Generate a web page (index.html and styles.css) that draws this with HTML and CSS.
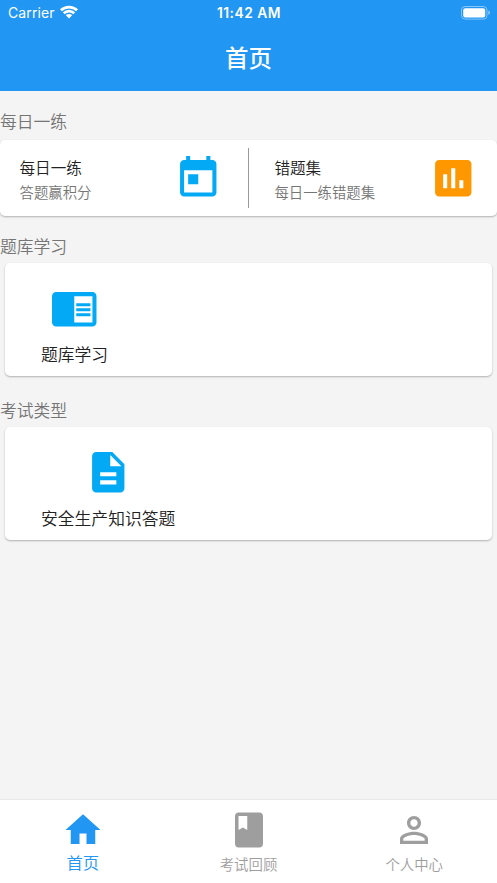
FILE: index.html
```html
<!DOCTYPE html>
<html lang="zh-CN">
<head>
<meta charset="utf-8">
<title>首页</title>
<link rel="stylesheet" href="styles.css">
</head>
<body>
<div class="app">
  <header class="header">
    <div class="status">
      <div class="carrier"><span>Carrier</span>
        <svg class="wifi" viewBox="0 0 18 14"><path d="M0 4.3A13 13 0 0 1 18 4.3L16.1 6.3A10.3 10.3 0 0 0 1.9 6.3Z"/><path d="M2.8 7.3A8.8 8.8 0 0 1 15.2 7.3L13.3 9.3A6.2 6.2 0 0 0 4.7 9.3Z"/><path d="M5.8 10.3A4.6 4.6 0 0 1 12.2 10.3L9 13.6Z"/></svg>
      </div>
      <div class="time">11:42 AM</div>
      <svg class="battery" viewBox="0 0 30 14"><rect x=".5" y=".5" width="25.5" height="12.6" rx="3.6" fill="none" stroke="#fff" stroke-opacity=".45"/><rect x="2.2" y="2.2" width="22" height="9.2" rx="2" fill="#fff"/><path d="M27.3 4.6Q29 5.2 29 6.8T27.3 9Z" fill="#fff" fill-opacity=".5"/></svg>
    </div>
    <h1 class="title">首页</h1>
  </header>
  <main class="content">
    <h2 class="section">每日一练</h2>
    <section class="card daily">
      <div class="entry">
        <div class="words"><div class="name">每日一练</div><div class="desc">答题赢积分</div></div>
        <svg class="icon blue" viewBox="0 0 24 24"><path d="M19 3h-1V1h-2v2H8V1H6v2H5c-1.11 0-1.99.9-1.99 2L3 19c0 1.1.89 2 2 2h14c1.1 0 2-.9 2-2V5c0-1.1-.9-2-2-2zm0 16H5V8h14v11zM7 10h5v5H7z"/></svg>
      </div>
      <div class="divider"></div>
      <div class="entry">
        <div class="words"><div class="name">错题集</div><div class="desc">每日一练错题集</div></div>
        <svg class="icon orange" viewBox="0 0 24 24"><path d="M19 3H5c-1.1 0-2 .9-2 2v14c0 1.1.9 2 2 2h14c1.1 0 2-.9 2-2V5c0-1.1-.9-2-2-2zM9 17H7v-7h2v7zm4 0h-2V7h2v10zm4 0h-2v-4h2v4z"/></svg>
      </div>
    </section>
    <h2 class="section second">题库学习</h2>
    <section class="card tile">
      <div class="tile-item">
        <svg class="icon blue" viewBox="0 0 24 24"><path d="M13 12h7v1.5h-7zm0-2.5h7V11h-7zm0 5h7V16h-7zM21 4H3c-1.1 0-2 .9-2 2v13c0 1.1.9 2 2 2h18c1.1 0 2-.9 2-2V6c0-1.1-.9-2-2-2zm0 15h-9V6h9v13z"/></svg>
        <span>题库学习</span>
      </div>
    </section>
    <h2 class="section third">考试类型</h2>
    <section class="card tile">
      <div class="tile-item">
        <svg class="icon blue" viewBox="0 0 24 24"><path d="M14 2H6c-1.1 0-1.99.9-1.99 2L4 20c0 1.1.89 2 1.99 2H18c1.1 0 2-.9 2-2V8l-6-6zm2 16H8v-2h8v2zm0-4H8v-2h8v2zm-3-5V3.5L18.5 9H13z"/></svg>
        <span>安全生产知识答题</span>
      </div>
    </section>
  </main>
  <nav class="nav">
    <div class="tab active"><svg viewBox="0 0 24 24"><path d="M10 20v-6h4v6h5v-8h3L12 3 2 12h3v8z"/></svg><span>首页</span></div>
    <div class="tab"><svg viewBox="0 0 24 24"><path d="M18 2H6c-1.1 0-2 .9-2 2v16c0 1.1.9 2 2 2h12c1.1 0 2-.9 2-2V4c0-1.1-.9-2-2-2zM6 4h5v8l-2.5-1.5L6 12V4z"/></svg><span>考试回顾</span></div>
    <div class="tab"><svg viewBox="0 0 24 24"><path d="M12 5.9c1.16 0 2.1.94 2.1 2.1s-.94 2.1-2.1 2.1S9.9 9.16 9.9 8s.94-2.1 2.1-2.1m0 9c2.97 0 6.1 1.46 6.1 2.1v1.1H5.9V17c0-.64 3.13-2.1 6.1-2.1M12 4C9.79 4 8 5.79 8 8s1.79 4 4 4 4-1.79 4-4-1.79-4-4-4zm0 9c-2.67 0-8 1.34-8 4v3h16v-3c0-2.66-5.33-4-8-4z"/></svg><span>个人中心</span></div>
  </nav>
</div>
</body>
</html>
```
FILE: styles.css
```css
* { box-sizing: border-box; }
body { margin: 0; font-family: Inter, "Noto Sans CJK SC", sans-serif; color: #212121; font-weight: 350; }
svg { display: block; }
.app { height: 883px; display: flex; flex-direction: column; background: #f4f4f4; overflow: hidden; }
.header { height: 91.4px; flex: none; background: #2196f3; color: #fff; }
.status { height: 25px; display: grid; grid-template-columns: 1fr auto 1fr; align-items: center; padding: 0 6px 0 8px; }
.carrier { display: flex; align-items: center; gap: 5.5px; font-size: 14px; font-weight: 400; letter-spacing: .1px; }
.wifi { width: 18px; height: 14px; fill: #fff; margin-top: -2px; }
.time { font-size: 13.8px; font-weight: 600; letter-spacing: .5px; margin-right: 1px; }
.battery { width: 30px; height: 14px; justify-self: end; }
.title { margin: 0; height: 66px; line-height: 68px; font-size: 23.5px; font-weight: 500; text-align: center; }
.content { flex: 1; }
.section { margin: 19px 0 4.3px; height: 25px; line-height: 25px; font-size: 16.8px; font-weight: 350; color: #757575; }
.second { margin: 18.8px 0 3.5px; }
.third { margin: 22.6px 0 3.5px; }
.card { background: #fff; border-radius: 5px; box-shadow: 0 1px 2px rgba(0, 0, 0, .28); }
.daily { height: 76.3px; display: flex; align-items: center; }
.divider { width: 1.3px; height: 60px; background: #999; }
.entry { flex: 1; display: flex; justify-content: space-between; align-items: center; padding: 0 25px 0 19.5px; }
.divider + .entry { padding-left: 25.5px; padding-right: 19.5px; }
.entry .icon { margin-top: 1px; }
.words { padding-top: 6px; }
.name { font-size: 15.6px; line-height: 24px; font-weight: 350; }
.desc { font-size: 14.4px; line-height: 24px; color: #757575; }
.icon { width: 48.5px; height: 48.5px; }
.blue { fill: #03a9f4; }
.orange { fill: #ff9800; }
.tile { height: 112.8px; margin: 0 5px; padding: 21.2px 36px 0; display: flex; align-items: flex-start; }
.tile-item { display: flex; flex-direction: column; align-items: center; font-size: 16.8px; line-height: 25px; gap: 10.5px; }
.nav { height: 84px; flex: none; display: flex; background: #fff; border-top: 1px solid #e9e9e9; }
.tab { flex: 1; display: flex; flex-direction: column; align-items: center; padding-top: 8.5px; color: #9e9e9e; font-size: 14.4px; line-height: 27.4px; }
.tab svg { width: 42px; height: 42px; fill: currentColor; }
.active { color: #2196f3; font-size: 16.4px; line-height: 24.4px; }
```
